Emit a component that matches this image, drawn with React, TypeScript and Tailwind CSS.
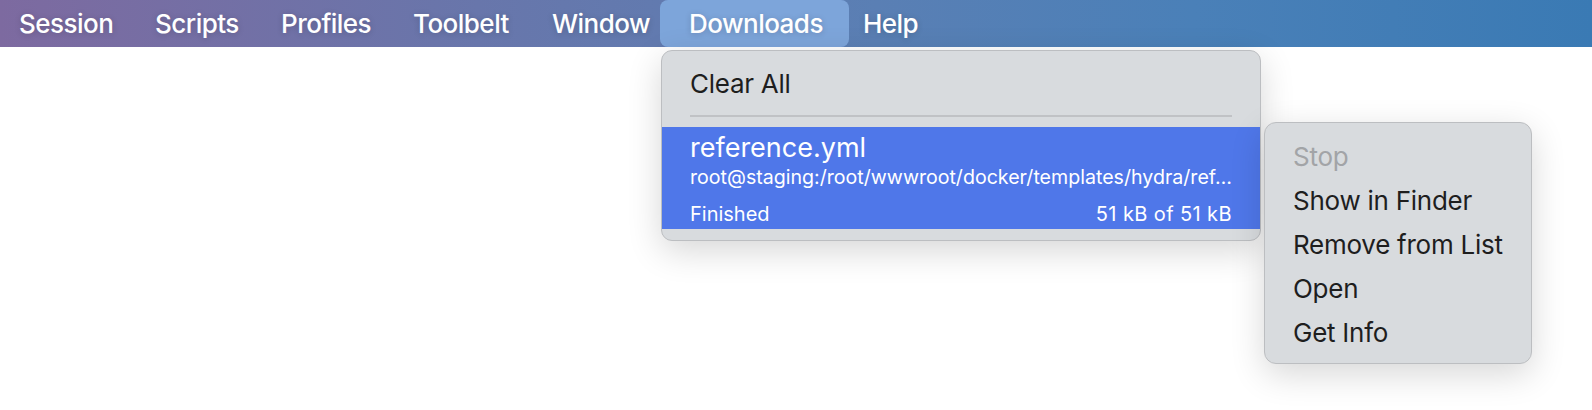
import React from 'react';

const font = { fontFamily: 'Inter, "Noto Sans", "Liberation Sans", sans-serif' };

const menuItems = [
  { label: 'Session', className: 'w-[134px] pl-[19px]' },
  { label: 'Scripts', className: 'w-[126px] pl-[21px]' },
  { label: 'Profiles', className: 'w-[132px] pl-[21px]' },
  { label: 'Toolbelt', className: 'w-[139px] pl-[21px]' },
  { label: 'Window', className: 'w-[129px] pl-[21px]' },
  { label: 'Downloads', className: 'w-[189px] pl-[29px] bg-[#7da5da] rounded-[8px]' },
  { label: 'Help', className: 'w-[120px] pl-[14px]' },
];

const subItems = [
  { label: 'Stop', disabled: true },
  { label: 'Show in Finder' },
  { label: 'Remove from List' },
  { label: 'Open' },
  { label: 'Get Info' },
];

const App: React.FC = () => {
  return (
    <div className="relative w-[1592px] h-[410px] bg-white overflow-hidden" style={font}>
      {/* menu bar */}
      <div className="flex h-[47px] bg-[linear-gradient(90deg,#7d6aa0_0%,#6876ab_30%,#5a7fb4_55%,#4a80b8_75%,#3a7ab4_100%)]">
        {menuItems.map(item => (
          <div
            key={item.label}
            className={`h-[47px] leading-[48px] text-[26px] font-medium tracking-[-0.02em] text-white [text-shadow:0_1px_6px_rgba(0,0,0,0.18)] ${item.className}`}
          >
            {item.label}
          </div>
        ))}
      </div>

      {/* downloads dropdown */}
      <div className="absolute left-[661px] top-[50px] w-[600px] rounded-[11px] border border-[#bcbec1] bg-[#d8dbde] pt-[11px] pb-[11px] shadow-[0_10px_34px_rgba(0,0,0,0.16)] overflow-hidden">
        <div className="h-[44px] leading-[44px] pl-[28px] text-[26px] tracking-[-0.01em] text-[#1e1e1e]">Clear All</div>
        <div className="mx-[28px] mt-[9px] mb-[10px] h-[2px] bg-[#c0c2c5]"></div>
        <div className="h-[102px] bg-[#4f77e9] px-[28px] pt-[4px] text-white">
          <div className="text-[27px] leading-[34px]">reference.yml</div>
          <div className="text-[19.6px] leading-[24px] whitespace-nowrap">
            root@staging:/root/wwwroot/docker/templates/hydra/ref…
          </div>
          <div className="mt-[11px] flex justify-between text-[20px] leading-[28px]">
            <span>Finished</span>
            <span className="tracking-[0.02em]">51 kB of 51 kB</span>
          </div>
        </div>
      </div>

      {/* context submenu */}
      <div className="absolute left-[1264px] top-[122px] w-[268px] rounded-[12px] border border-[#bcbec1] bg-[#d8dbde] pt-[12px] pb-[8px] shadow-[0_10px_34px_rgba(0,0,0,0.16)]">
        {subItems.map(item => (
          <div
            key={item.label}
            className={`h-[44px] leading-[44px] pl-[28px] text-[26px] tracking-[-0.01em] ${
              item.disabled ? 'text-[#a2a4a7]' : 'text-[#1e1e1e]'
            }`}
          >
            {item.label}
          </div>
        ))}
      </div>
    </div>
  );
};

export default App;
